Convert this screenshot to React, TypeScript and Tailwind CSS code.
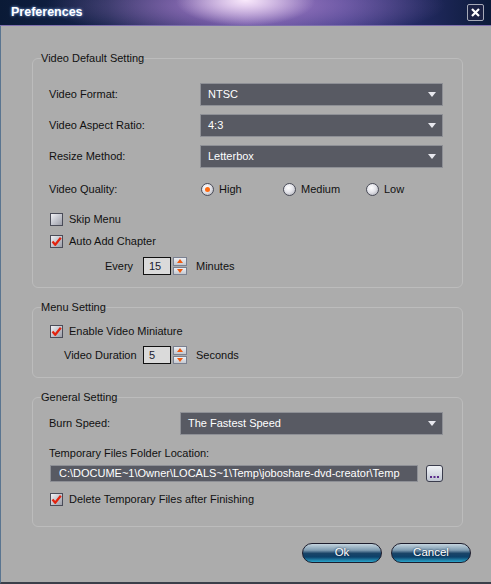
import React from 'react';

const font = "font-['Liberation_Sans',Arial,sans-serif]";

const Arrow: React.FC = () => (
    <svg width="8" height="5" viewBox="0 0 8 5" className="shrink-0">
        <path d="M0 0 L8 0 L4 5 Z" fill="#e8e8ee" />
    </svg>
);

const Dropdown: React.FC<{ value: string }> = ({ value }) => (
    <div className="flex-1 h-[23px] bg-[#585a63] border border-[#8e9096] flex items-center justify-between pl-[7px] pr-[6px]">
        <span className="text-white text-[11px]">{value}</span>
        <Arrow />
    </div>
);

const Check: React.FC<{ checked?: boolean }> = ({ checked }) => (
    <div className="w-[13px] h-[13px] shrink-0 border border-[#4a4c58] bg-[linear-gradient(135deg,#f2f2f6_0%,#c8cad2_45%,#9c9ea8_100%)] flex items-center justify-center">
        {checked && (
            <svg width="11" height="11" viewBox="0 0 11 11">
                <path d="M1.5 5.5 L4.2 8.8 L9.8 1.8" stroke="#e3220e" strokeWidth="2.2" fill="none" strokeLinejoin="round" />
            </svg>
        )}
    </div>
);

const Radio: React.FC<{ checked?: boolean }> = ({ checked }) => (
    <div className="w-[13px] h-[13px] shrink-0 rounded-full border border-[#4a4c58] bg-[radial-gradient(circle_at_40%_35%,#ffffff_0%,#e4e4ea_45%,#a4a6ae_100%)] flex items-center justify-center">
        {checked && <div className="w-[5px] h-[5px] rounded-full bg-[#ff6a10]" />}
    </div>
);

const CheckRow: React.FC<{ label: string; checked?: boolean; className?: string }> = ({ label, checked, className }) => (
    <div className={`flex items-center h-[13px] ml-[1px] ${className || ''}`}>
        <Check checked={checked} />
        <span className="ml-[6px] text-[11px] text-[#111]">{label}</span>
    </div>
);

const Spin: React.FC<{ value: string }> = ({ value }) => (
    <div className="flex items-center h-[18px]">
        <div className="w-[28px] h-[18px] bg-[#dadada] border border-[#111] flex items-center pl-[5px] text-[11px] text-[#1a1a30]">
            {value}
        </div>
        <div className="ml-[2px] w-[14px] h-[18px] flex flex-col gap-[1px]">
            <div className="flex-1 bg-[linear-gradient(to_bottom,#eef0f4,#c4c8d0)] border border-[#7a8090] flex items-center justify-center">
                <svg width="6" height="4" viewBox="0 0 6 4"><path d="M0 4 L3 0 L6 4 Z" fill="#f05a10" /></svg>
            </div>
            <div className="flex-1 bg-[linear-gradient(to_bottom,#eef0f4,#c4c8d0)] border border-[#7a8090] flex items-center justify-center">
                <svg width="6" height="4" viewBox="0 0 6 4"><path d="M0 0 L3 4 L6 0 Z" fill="#f05a10" /></svg>
            </div>
        </div>
    </div>
);

const Group: React.FC<{ title: string; className?: string; children: React.ReactNode }> = ({ title, className, children }) => (
    <fieldset className={`min-w-0 border border-[#bcbcbc] rounded-[6px] pl-[8px] pr-[19px] ${className || ''}`}>
        <legend className="text-[11px] leading-[14px] text-[#111]">{title}</legend>
        <div className="ml-[8px] flex flex-col">{children}</div>
    </fieldset>
);

const PillButton: React.FC<{ label: string }> = ({ label }) => (
    <button className="w-[80px] h-[20px] rounded-full border border-[#1c1c2c] bg-[linear-gradient(to_bottom,#c4d4de_0%,#7c9ab0_35%,#1a4468_52%,#0d416a_72%,#2ba6cc_100%)] text-white text-[11.5px] leading-none flex items-center justify-center [text-shadow:0_0_2px_#0a2040]">
        {label}
    </button>
);

export default function App() {
    return (
        <div className={`w-[491px] h-[584px] flex flex-col ${font}`}>
            {/* Title bar */}
            <div className="h-[26px] shrink-0 flex items-center justify-between pl-[11px] pr-[7px] border-b border-[#7e6fae] bg-[radial-gradient(ellipse_70px_26px_at_50%_0%,rgba(255,240,255,0.95),transparent),radial-gradient(ellipse_200px_36px_at_50%_20%,rgba(170,130,205,0.9),transparent),linear-gradient(to_right,#0a1a36_0%,#14224a_22%,#43397e_42%,#5a4a96_50%,#3d3a86_70%,#232a62_85%,#0c1b3a_100%)]">
                <span className="text-white font-bold text-[12.5px] [text-shadow:0_0_3px_#8ab8ff]">Preferences</span>
                <div className="w-[17px] h-[17px] rounded-[2px] border border-[#a6aab8] bg-[#1b2244] flex items-center justify-center">
                    <svg width="9" height="9" viewBox="0 0 9 9">
                        <path d="M1 1 L8 8 M8 1 L1 8" stroke="#fff" strokeWidth="2.2" />
                    </svg>
                </div>
            </div>

            {/* Body */}
            <div className="flex-1 flex flex-col bg-[#acacac] border-l border-l-[#5a7590] border-b-2 border-b-[#3a3f4a] pl-[31px] pr-[28px] pt-[25px]">
                <Group title="Video Default Setting">
                    <div className="flex items-center mt-[18px]">
                        <span className="w-[151px] text-[11px] text-[#111]">Video Format:</span>
                        <Dropdown value="NTSC" />
                    </div>
                    <div className="flex items-center mt-[8px]">
                        <span className="w-[151px] text-[11px] text-[#111]">Video Aspect Ratio:</span>
                        <Dropdown value="4:3" />
                    </div>
                    <div className="flex items-center mt-[8px]">
                        <span className="w-[151px] text-[11px] text-[#111]">Resize Method:</span>
                        <Dropdown value="Letterbox" />
                    </div>
                    <div className="flex items-center h-[13px] mt-[15px]">
                        <span className="w-[152px] shrink-0 text-[11px] text-[#111]">Video Quality:</span>
                        <div className="w-[82px] flex items-center">
                            <Radio checked />
                            <span className="ml-[5px] text-[11px] text-[#111]">High</span>
                        </div>
                        <div className="w-[83px] flex items-center">
                            <Radio />
                            <span className="ml-[5px] text-[11px] text-[#111]">Medium</span>
                        </div>
                        <div className="flex items-center">
                            <Radio />
                            <span className="ml-[5px] text-[11px] text-[#111]">Low</span>
                        </div>
                    </div>
                    <CheckRow label="Skip Menu" className="mt-[17px]" />
                    <CheckRow label="Auto Add Chapter" checked className="mt-[9px]" />
                    <div className="flex items-center mt-[9px] pl-[56px] mb-[12px]">
                        <span className="w-[38px] text-[11px] text-[#111]">Every</span>
                        <Spin value="15" />
                        <span className="ml-[9px] text-[11px] text-[#111]">Minutes</span>
                    </div>
                </Group>

                <Group title="Menu Setting" className="mt-[12px]">
                    <CheckRow label="Enable Video Miniature" checked className="mt-[11px]" />
                    <div className="flex items-center mt-[8px] pl-[15px] mb-[13px]">
                        <span className="w-[79px] text-[11px] text-[#111]">Video Duration</span>
                        <Spin value="5" />
                        <span className="ml-[9px] text-[11px] text-[#111]">Seconds</span>
                    </div>
                </Group>

                <Group title="General Setting" className="mt-[12px]">
                    <div className="flex items-center mt-[8px]">
                        <span className="w-[131px] text-[11px] text-[#111]">Burn Speed:</span>
                        <Dropdown value="The Fastest Speed" />
                    </div>
                    <div className="mt-[11px] text-[11px] leading-[14px] text-[#111]">Temporary Files Folder Location:</div>
                    <div className="flex items-center mt-[5px] ml-[1px]">
                        <div className="w-[368px] h-[17px] bg-[#585a63] border border-[#8e9096] flex items-center pl-[8px] text-white text-[11px] overflow-hidden whitespace-nowrap">
                            C:\DOCUME~1\Owner\LOCALS~1\Temp\joboshare-dvd-creator\Temp
                        </div>
                        <div className="ml-[8px] w-[17px] h-[17px] rounded-[3px] border border-[#3a3c4c] bg-[linear-gradient(to_bottom,#f0f2f6,#c0c6d2)] flex items-end justify-center pb-[3px]">
                            <svg width="9" height="2" viewBox="0 0 9 2">
                                <rect x="0" y="0" width="2" height="2" fill="#5a2a8a" />
                                <rect x="3.5" y="0" width="2" height="2" fill="#5a2a8a" />
                                <rect x="7" y="0" width="2" height="2" fill="#5a2a8a" />
                            </svg>
                        </div>
                    </div>
                    <CheckRow label="Delete Temporary Files after Finishing" checked className="mt-[11px] mb-[20px]" />
                </Group>

                <div className="flex justify-end gap-[9px] mt-[16px] -mr-[8px]">
                    <PillButton label="Ok" />
                    <PillButton label="Cancel" />
                </div>
            </div>
        </div>
    );
}
